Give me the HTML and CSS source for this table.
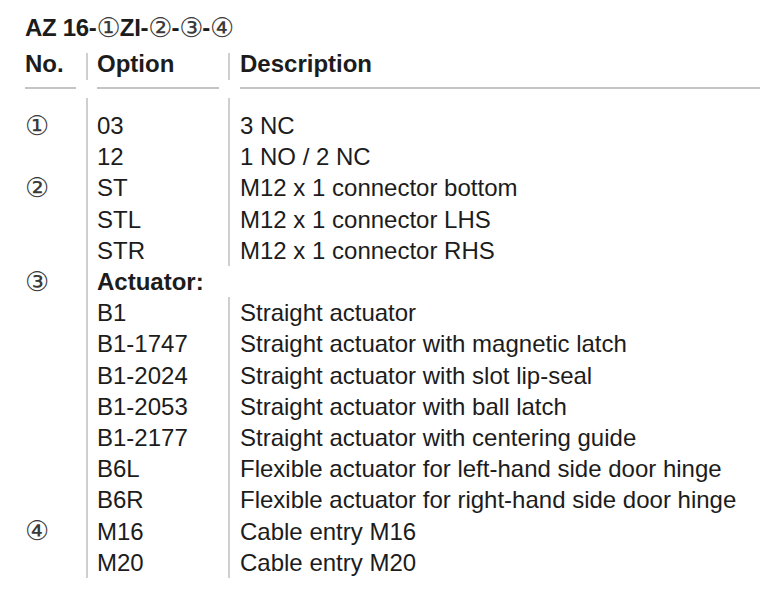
FILE: index.html
```html
<!DOCTYPE html>
<html>
<head>
<meta charset="utf-8">
<link rel="stylesheet" href="styles.css">
</head>
<body>
<div class="page">
  <h1 class="title">AZ 16-<span class="c">①</span>ZI-<span class="c">②</span>-<span class="c">③</span>-<span class="c">④</span></h1>
  <div class="head">
    <div class="hcell h1">No.</div>
    <div class="hcell h2">Option</div>
    <div class="hcell h3">Description</div>
  </div>
  <div class="rules">
    <div class="rule r1"></div>
    <div class="rule r2"></div>
    <div class="rule r3"></div>
  </div>
  <div class="rows">
    <div class="no first"></div><div class="opt first"></div><div class="desc first"></div>

    <div class="no"><span class="c">①</span></div><div class="opt">03</div><div class="desc">3 NC</div>
    <div class="no"></div><div class="opt">12</div><div class="desc">1 NO / 2 NC</div>
    <div class="no"><span class="c">②</span></div><div class="opt">ST</div><div class="desc">M12 x 1 connector bottom</div>
    <div class="no"></div><div class="opt">STL</div><div class="desc">M12 x 1 connector LHS</div>
    <div class="no"></div><div class="opt">STR</div><div class="desc">M12 x 1 connector RHS</div>
    <div class="no"><span class="c">③</span></div><div class="opt bold">Actuator:</div><div class="desc gap"></div>
    <div class="no"></div><div class="opt">B1</div><div class="desc">Straight actuator</div>
    <div class="no"></div><div class="opt">B1-1747</div><div class="desc">Straight actuator with magnetic latch</div>
    <div class="no"></div><div class="opt">B1-2024</div><div class="desc">Straight actuator with slot lip-seal</div>
    <div class="no"></div><div class="opt">B1-2053</div><div class="desc">Straight actuator with ball latch</div>
    <div class="no"></div><div class="opt">B1-2177</div><div class="desc">Straight actuator with centering guide</div>
    <div class="no"></div><div class="opt">B6L</div><div class="desc">Flexible actuator for left-hand side door hinge</div>
    <div class="no"></div><div class="opt">B6R</div><div class="desc">Flexible actuator for right-hand side door hinge</div>
    <div class="no"><span class="c">④</span></div><div class="opt">M16</div><div class="desc">Cable entry M16</div>
    <div class="no"></div><div class="opt">M20</div><div class="desc">Cable entry M20</div>
  </div>
</div>
</body>
</html>
```

FILE: styles.css
```css
html, body {
  margin: 0;
  padding: 0;
  background: #ffffff;
}

.page {
  padding: 14px 7px 0 25px;
  font-family: "Liberation Sans", Arial, sans-serif;
  color: #1c1c1c;
  font-size: 24px;
}

.title {
  margin: 0;
  height: 27px;
  font-size: 24px;
  font-weight: bold;
  line-height: 27px;
  letter-spacing: -0.3px;
  white-space: nowrap;
}

.c {
  font-family: "DejaVu Sans", sans-serif;
  font-weight: normal;
  font-size: 27px;
  line-height: 0;
  letter-spacing: -1px;
  color: #3a3a3a;
}

.title .c {
  vertical-align: -1px;
}

.head {
  display: grid;
  grid-template-columns: 61px 142px 1fr;
  margin-top: 12px;
}

.hcell {
  font-weight: bold;
  line-height: 21px;
  padding-bottom: 6px;
}

.h2, .h3 {
  border-left: 2px solid #cfcfcf;
}

.h2 { padding-left: 9px; }
.h3 { padding-left: 10px; }

.rules {
  display: grid;
  grid-template-columns: 61px 142px 1fr;
  margin-top: 7px;
}

.rule {
  height: 2px;
  background: #c4c4c4;
}

.r1 { margin-right: 10px; }
.r2 { margin-left: 11px; margin-right: 9px; }
.r3 { margin-left: 12px; }

.rows {
  display: grid;
  grid-template-columns: 61px 142px 1fr;
  margin-top: 9px;
  line-height: 31.2px;
}

.first {
  height: 12px;
}

.no {
  display: flex;
  align-items: center;
  height: 31.2px;
}

.no.first {
  height: 12px;
}

.opt {
  border-left: 2px solid #cfcfcf;
  padding-left: 9px;
  white-space: nowrap;
}

.desc {
  border-left: 2px solid #cfcfcf;
  padding-left: 10px;
  white-space: nowrap;
}

.desc.gap {
  border-left-color: transparent;
}

.bold {
  font-weight: bold;
}
```
